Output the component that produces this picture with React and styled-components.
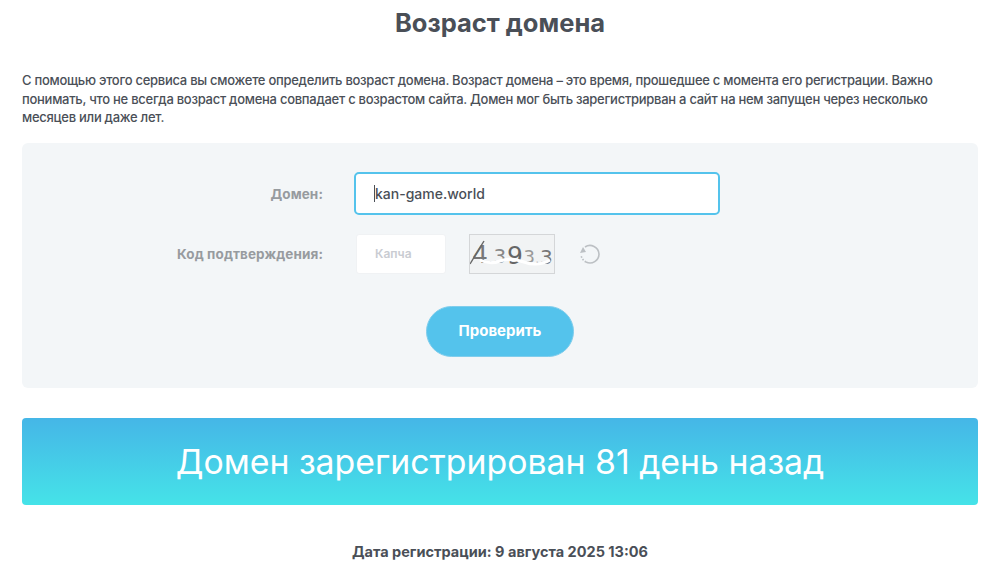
import React from "react";
import styled, { createGlobalStyle } from "styled-components";

const GlobalStyle = createGlobalStyle`
  html, body {
    margin: 0;
    padding: 0;
    background: #fff;
  }
  body {
    font-family: Inter, "Open Sans", "Liberation Sans", sans-serif;
    color: #4a4f57;
  }
`;

const Page = styled.div`
  width: 987px;
  height: 588px;
  padding: 0 9px 0 22px;
  box-sizing: border-box;
  overflow: hidden;
`;
const Title = styled.h1`
  margin: 0;
  padding-top: 8px;
  height: 47px;
  font-size: 25.5px;
  line-height: 30px;
  font-weight: 700;
  text-align: center;
  box-sizing: content-box;
`;
const Intro = styled.p`
  margin: 16px 0 16px;
  font-size: 13px;
  line-height: 18.5px;
  font-weight: 500;
  letter-spacing: -0.27px;
`;
const FormPanel = styled.div`
  height: 245px;
  box-sizing: border-box;
  padding-top: 29px;
  background: #f3f6f8;
  border-radius: 6px;
`;
const Row = styled.div`
  display: flex;
  align-items: center;
  height: 44px;
  margin-bottom: ${(p) => p.$gap || 0}px;
`;
const Label = styled.label`
  width: 301px;
  text-align: right;
  font-size: 13.5px;
  font-weight: 700;
  letter-spacing: 0.1px;
  color: #979b9f;
  margin-right: 31px;
`;
const DomainInput = styled.div`
  width: 366px;
  height: 43px;
  box-sizing: border-box;
  display: flex;
  align-items: center;
  padding-left: 18px;
  background: #fff;
  border: 2px solid #54c3ec;
  border-radius: 5px;
  font-size: 14px;
  font-weight: 500;
`;
const Caret = styled.span`
  display: inline-block;
  width: 1px;
  height: 17px;
  background: #4a4f57;
`;
const CaptchaInput = styled.div`
  width: 90px;
  height: 40px;
  margin-left: 2px;
  padding-left: 18px;
  display: flex;
  align-items: center;
  background: #fff;
  border: 1px solid #f0f2f4;
  border-radius: 3px;
  box-sizing: border-box;
  font-size: 12px;
  font-weight: 600;
  color: #c9ccd2;
`;
const CaptchaImage = styled.div`
  width: 86px;
  height: 40px;
  margin-left: 23px;
  box-sizing: border-box;
  border: 1px solid #d4d6d8;
  background: #f1f3f4;
`;
const Reload = styled.div`
  margin-left: 23px;
  width: 24px;
  height: 24px;
  color: #bcc0c4;
`;
const SubmitRow = styled.div`
  display: flex;
  justify-content: center;
  margin-top: 30px;
`;
const SubmitButton = styled.button`
  width: 148px;
  height: 51px;
  padding: 0 0 2px;
  border: 1px solid #7fcdec;
  border-radius: 26px;
  background: #54c3ec;
  color: #fff;
  font-family: inherit;
  font-size: 15px;
  font-weight: 700;
`;
const ResultBanner = styled.div`
  height: 87px;
  margin-top: 30px;
  display: flex;
  align-items: center;
  justify-content: center;
  border-radius: 4px;
  background: linear-gradient(180deg, #45b6e7 0%, #45e3e8 100%);
  color: #fff;
  font-size: 33.8px;
  font-weight: 400;
`;
const RegDate = styled.div`
  margin-top: 38px;
  text-align: center;
  font-size: 14.5px;
  font-weight: 700;
`;

const CaptchaDrawing = () => (
  <svg width="84" height="38" viewBox="0 0 84 38" fontFamily="'DejaVu Sans', sans-serif">
    <text x="2" y="28" fontSize="25" fill="#777">4</text>
    <text x="18.5" y="28" fontSize="12" fill="#888">.</text>
    <text x="23.5" y="28" fontSize="20" fill="#888">3</text>
    <text x="37" y="29" fontSize="25" fill="#666">9</text>
    <text x="53.5" y="28" fontSize="18" fill="#999">3</text>
    <text x="65.5" y="28" fontSize="11" fill="#999">.</text>
    <text x="70" y="29" fontSize="20" fill="#777">3</text>
    <path d="M0 29 L14 6" stroke="#666" strokeWidth="1.4" />
    <path d="M10 25 q10 5 20 1 t24 1 t26 -2" fill="none" stroke="#fff" strokeWidth="3" />
  </svg>
);

const ReloadIcon = () => (
  <svg width="24" height="24" viewBox="0 0 24 24" fill="none" stroke="currentColor" strokeWidth="1.6">
    <path d="M7 5 A9 9 0 0 1 21 12 A9 9 0 0 1 8 20" />
    <path d="M8 20 A9 9 0 0 1 3 13" strokeDasharray="1.5 1.5" />
    <path d="M8 10 L2 11 L5 5 Z" fill="currentColor" stroke="none" />
  </svg>
);

export default function App() {
  return (
    <Page>
      <GlobalStyle />
      <Title>Возраст домена</Title>
      <Intro>
        С помощью этого сервиса вы сможете определить возраст домена. Возраст домена – это время, прошедшее с момента его регистрации. Важно понимать, что не всегда возраст домена совпадает с возрастом сайта. Домен мог быть зарегистрирван а сайт на нем запущен через несколько месяцев или даже лет.
      </Intro>
      <FormPanel>
        <Row $gap={16}>
          <Label>Домен:</Label>
          <DomainInput>
            <Caret />
            kan-game.world
          </DomainInput>
        </Row>
        <Row>
          <Label>Код подтверждения:</Label>
          <CaptchaInput>Капча</CaptchaInput>
          <CaptchaImage>
            <CaptchaDrawing />
          </CaptchaImage>
          <Reload>
            <ReloadIcon />
          </Reload>
        </Row>
        <SubmitRow>
          <SubmitButton>Проверить</SubmitButton>
        </SubmitRow>
      </FormPanel>
      <ResultBanner>Домен зарегистрирован 81 день назад</ResultBanner>
      <RegDate>Дата регистрации: 9 августа 2025 13:06</RegDate>
    </Page>
  );
}
